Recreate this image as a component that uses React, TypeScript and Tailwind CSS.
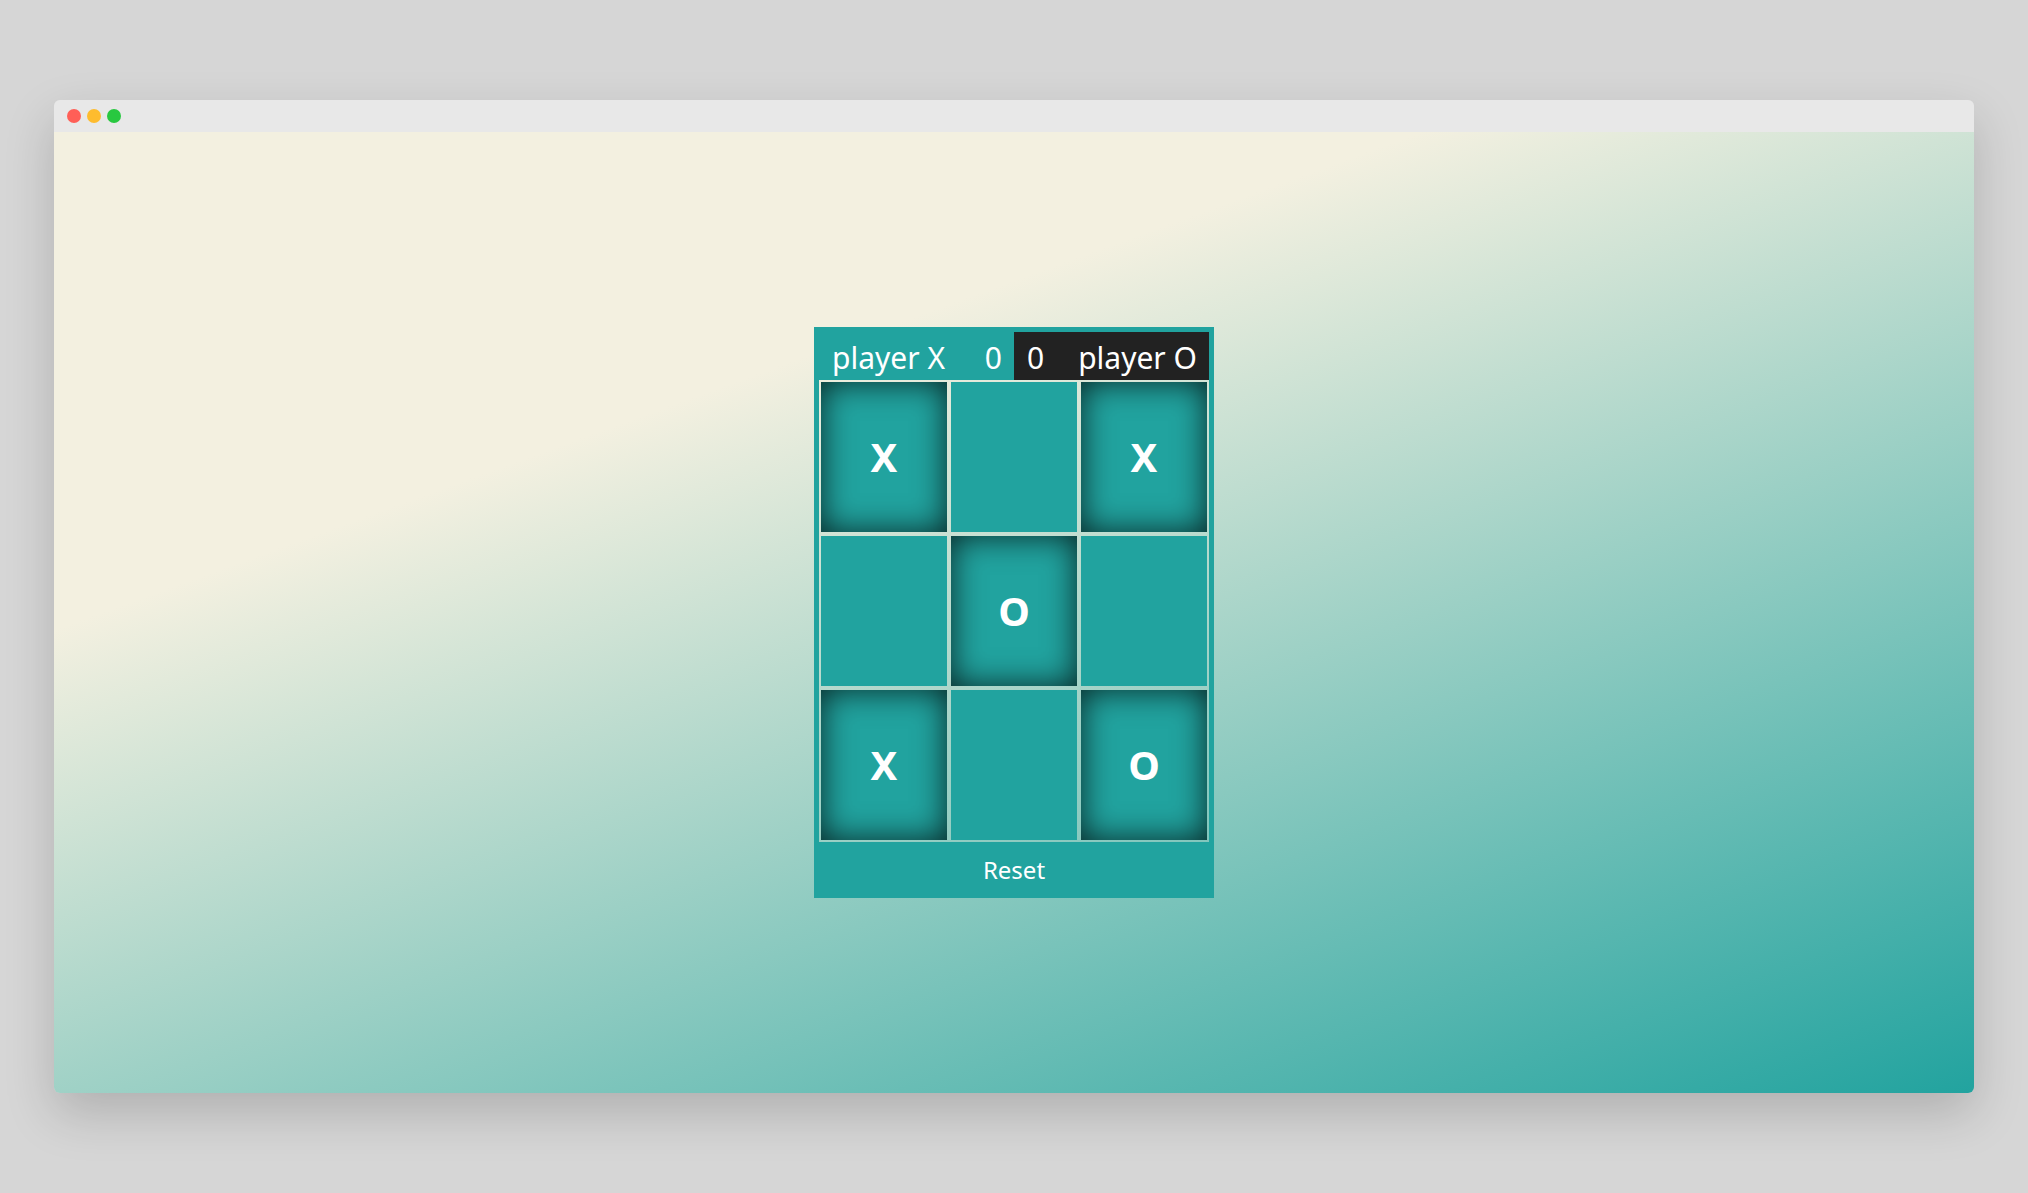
const board: string[] = ['X', '', 'X', '', 'O', '', 'X', '', 'O'];

const Cell = ({ value }: { value: string }) => {
    return (
        <div
            className={
                value
                    ? 'flex items-center justify-center bg-[#21a39f] text-white text-[40px] font-bold shadow-[inset_0_0_32px_rgba(0,0,0,0.78)]'
                    : 'flex items-center justify-center bg-[#21a39f]'
            }
        >
            {value}
        </div>
    );
};

const App = () => {
    return (
        <div className="flex h-screen w-full items-center justify-center bg-[#d6d6d6]" style={{ fontFamily: '"Noto Sans", "Open Sans", sans-serif' }}>
            <div className="flex h-[993px] w-[1920px] flex-col overflow-hidden rounded-md shadow-[0_20px_50px_rgba(0,0,0,0.18)]">
                {/* title bar */}
                <div className="flex h-8 shrink-0 items-center gap-[6px] bg-[#e8e8e8] pl-[13px]">
                    <span className="h-[14px] w-[14px] rounded-full bg-[#ff5f57]" />
                    <span className="h-[14px] w-[14px] rounded-full bg-[#febc2e]" />
                    <span className="h-[14px] w-[14px] rounded-full bg-[#28c840]" />
                </div>

                <div className="flex flex-1 items-center justify-center bg-[linear-gradient(160deg,#f3f0e0_30%,#22a39f_100%)]">
                    <div className="flex w-[400px] flex-col">
                        {/* scores */}
                        <div className="flex bg-[#21a39f] px-[5px] pt-[5px] text-[30px] leading-none text-white">
                            <div className="flex h-12 flex-1 items-center justify-between pl-[13px] pr-3 pt-1">
                                <span>player X</span>
                                <span>0</span>
                            </div>
                            <div className="flex h-12 flex-1 items-center justify-between bg-[#222222] pl-[13px] pr-3 pt-1">
                                <span>0</span>
                                <span>player O</span>
                            </div>
                        </div>

                        {/* board */}
                        <div className="border-x-[5px] border-[#21a39f]">
                            <div className="grid h-[462px] grid-cols-3 grid-rows-3 gap-1 p-[2px]">
                                {board.map((v, i) => (
                                    <Cell key={i} value={v} />
                                ))}
                            </div>
                        </div>

                        <button className="flex h-14 items-center justify-center bg-[#21a39f] text-[24px] text-white">
                            Reset
                        </button>
                    </div>
                </div>
            </div>
        </div>
    );
};

export default App;
